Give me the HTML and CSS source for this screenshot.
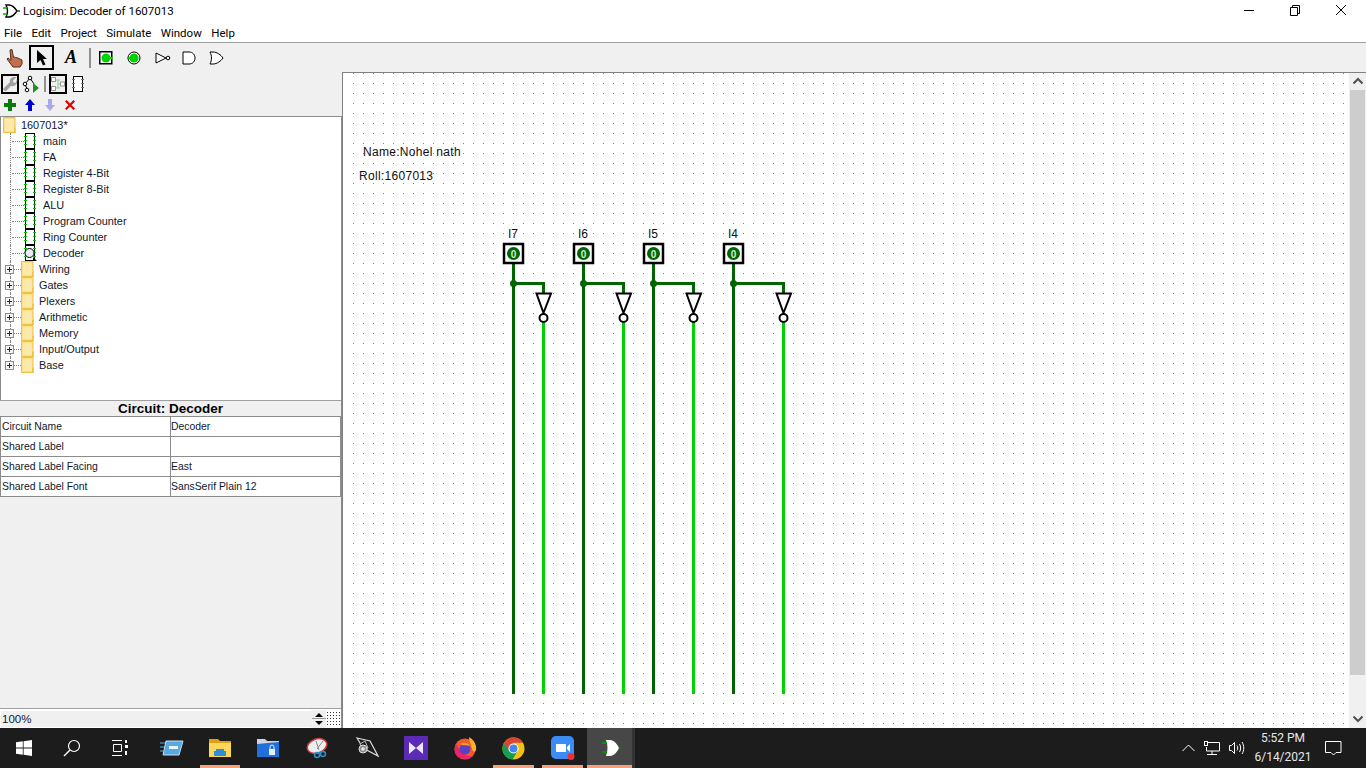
FILE: index.html
```html
<!DOCTYPE html>
<html lang="en">
<head>
<meta charset="utf-8">
<title>Logisim: Decoder of 1607013</title>
<link rel="stylesheet" href="styles.css">
</head>
<body>
<svg class="defs" width="0" height="0" aria-hidden="true">
  <defs>
    <symbol id="ic-circuit" viewBox="0 0 12 16">
      <rect x="1.500" y="0.500" width="9" height="15" fill="#fff" stroke="#000"/>
      <g fill="#00c800"><rect x="0" y="3" width="3" height="1"/><rect x="0" y="7" width="3" height="1"/><rect x="0" y="11" width="3" height="1"/><rect x="9" y="3" width="3" height="1"/><rect x="9" y="7" width="3" height="1"/><rect x="9" y="11" width="3" height="1"/></g>
      <g fill="#004000"><rect x="1" y="5" width="1" height="1"/><rect x="1" y="9" width="1" height="1"/><rect x="10" y="5" width="1" height="1"/><rect x="10" y="9" width="1" height="1"/></g>
    </symbol>
    <symbol id="ic-folder" viewBox="0 0 13 16">
      <path d="M.5.5h11.500v10.500h1v4.500H.5z" fill="#fde08c" stroke="#eec23e"/>
      <path d="M2 2h9v12H2z" fill="#fee9ac"/>
      <path d="M11.500 11v4" stroke="#eec23e" fill="none"/>
    </symbol>
    <symbol id="ic-exp" viewBox="0 0 9 9">
      <rect x=".5" y=".5" width="8" height="8" fill="#f4f4f4" stroke="#8c8c8c"/>
      <path d="M2 4.500h5M4.500 2v5" stroke="#1a2a55" fill="none"/>
    </symbol>
  </defs>
</svg>

<header class="titlebar">
  <svg class="app-icon" width="18" height="16" viewBox="0 0 18 16"><path d="M4 2h3c4 0 6 3 8 6-2 3-4 6-8 6H4c2-4 2-8 0-12z" fill="#fff" stroke="#000" stroke-width="1.400"/><path d="M1 5h4M1 11h4" stroke="#00b000" stroke-width="1.600"/><path d="M15 8h3" stroke="#008000" stroke-width="1.600"/></svg>
  <span class="title-text">Logisim: Decoder of 1607013</span>
  <div class="win-btns">
    <svg width="46" height="22" viewBox="0 0 46 22"><path d="M18 10.500h10" stroke="#000"/></svg>
    <svg width="46" height="22" viewBox="0 0 46 22"><path d="M18.500 7.500h7v8h-7zM20.500 7.500v-2h7v8h-2" fill="none" stroke="#000"/></svg>
    <svg width="46" height="22" viewBox="0 0 46 22"><path d="M18 5l10 10M28 5L18 15" stroke="#000"/></svg>
  </div>
</header>
<nav class="menubar">
  <span>File</span><span>Edit</span><span>Project</span><span>Simulate</span><span>Window</span><span>Help</span>
</nav>
<div class="toolbar">
  <svg class="t-hand" width="18" height="20" viewBox="0 0 18 20"><path d="M6 1.500l1.500 8 1-.5 1 .5 1.500.3 2 .7 3 1.500v4l-2 3H7l-6-8 1-1 3 2.500L4 2z" fill="#c0704c" stroke="#5a2c18"/></svg>
  <span class="t-box"><svg width="14" height="18" viewBox="0 0 14 18"><path d="M2 1v13l3.500-3 2.500 5.500 2.500-1-2.500-5.500H12z" fill="#000"/></svg></span>
  <span class="t-a">A</span>
  <span class="t-sep"></span>
  <svg class="t-i1" width="14" height="14" viewBox="0 0 14 14"><rect x=".75" y=".75" width="12" height="12" fill="#fff" stroke="#000" stroke-width="1.500"/><circle cx="7" cy="7" r="4.500" fill="#00d200"/><path d="M9 7h5" stroke="#00d200" stroke-width="2"/></svg>
  <svg class="t-i2" width="14" height="14" viewBox="0 0 14 14"><circle cx="7" cy="7" r="6" fill="#fff" stroke="#000"/><circle cx="7" cy="7" r="4.500" fill="#00d200"/><path d="M0 7h3" stroke="#00d200" stroke-width="2"/></svg>
  <svg class="t-i3" width="16" height="14" viewBox="0 0 16 14"><path d="M1 2l10 5-10 5z" fill="#fff" stroke="#000"/><circle cx="13" cy="7" r="1.800" fill="#fff" stroke="#000"/></svg>
  <svg class="t-i4" width="14" height="14" viewBox="0 0 14 14"><path d="M1 1h6c4 0 6 3 6 6s-2 6-6 6H1z" fill="#fff" stroke="#000"/></svg>
  <svg class="t-i5" width="15" height="14" viewBox="0 0 15 14"><path d="M1 1h3c4 0 8 3 10 6-2 3-6 6-10 6H1c2-4 2-8 0-12z" fill="#fff" stroke="#000"/></svg>
</div>

<main class="workspace">
  <aside class="sidebar">
    <div class="row-tools">
      <span class="rt-box"><svg width="16" height="16" viewBox="0 0 16 16"><path d="M1 13l7-7C7 3 10 0 14.500 1.200L11 4.500l.5 2 2 .5L15 3.500c1 4-2 7.500-6 6.500l-5.500 5.500z" fill="#a0a0a0"/></svg></span>
      <svg class="rt-sim" width="18" height="18" viewBox="0 0 18 18"><path d="M8 3L3 9l2 5M8 3l4 6" fill="none" stroke="#000"/><circle cx="8" cy="3" r="1.800" fill="#fff" stroke="#000"/><circle cx="3" cy="9" r="1.800" fill="#fff" stroke="#000"/><circle cx="5" cy="15" r="1.800" fill="#fff" stroke="#000"/><path d="M11 8l6 5-6 5z" fill="#2a8a2a"/></svg>
      <span class="rt-sep"></span>
      <span class="rt-box"><svg width="16" height="16" viewBox="0 0 16 16"><path d="M5 4h5M5 12h5M8 4v8M8 8h2" stroke="#9ec89e" fill="none"/><rect x="1.500" y="1.500" width="4" height="4" fill="#fff" stroke="#999"/><rect x="1.500" y="10.500" width="4" height="4" fill="#fff" stroke="#999"/><rect x="10.500" y="6" width="4" height="4" fill="#fff" stroke="#999"/></svg></span>
      <svg class="rt-app" width="12" height="16" viewBox="0 0 12 16"><use href="#ic-circuit"/></svg>
    </div>
    <div class="row-edit">
      <svg width="12" height="12" viewBox="0 0 12 12"><path d="M4 0h4v4h4v4H8v4H4V8H0V4h4z" fill="#0a7a0a"/></svg>
      <svg width="12" height="12" viewBox="0 0 12 12"><path d="M6 0l5 6H8v6H4V6H1z" fill="#0000d0"/></svg>
      <svg width="12" height="12" viewBox="0 0 12 12"><path d="M4 0h4v6h3l-5 6-5-6h3z" fill="#a8a8f0"/></svg>
      <svg width="12" height="12" viewBox="0 0 12 12"><path d="M1 2.500L2.500 1 6 4.500 9.500 1 11 2.500 7.500 6 11 9.500 9.500 11 6 7.500 2.500 11 1 9.500 4.500 6z" fill="#e00000"/></svg>
    </div>
    <div class="lower">
    <div class="tree">
      <div class="node root"><svg class="folder" width="13" height="16"><use href="#ic-folder"/></svg><span>1607013*</span></div>
      <div class="node circ"><i class="conn"></i><svg class="cic" width="12" height="16"><use href="#ic-circuit"/></svg><span>main</span></div>
      <div class="node circ"><i class="conn"></i><svg class="cic" width="12" height="16"><use href="#ic-circuit"/></svg><span>FA</span></div>
      <div class="node circ"><i class="conn"></i><svg class="cic" width="12" height="16"><use href="#ic-circuit"/></svg><span>Register 4-Bit</span></div>
      <div class="node circ"><i class="conn"></i><svg class="cic" width="12" height="16"><use href="#ic-circuit"/></svg><span>Register 8-Bit</span></div>
      <div class="node circ"><i class="conn"></i><svg class="cic" width="12" height="16"><use href="#ic-circuit"/></svg><span>ALU</span></div>
      <div class="node circ"><i class="conn"></i><svg class="cic" width="12" height="16"><use href="#ic-circuit"/></svg><span>Program Counter</span></div>
      <div class="node circ"><i class="conn"></i><svg class="cic" width="12" height="16"><use href="#ic-circuit"/></svg><span>Ring Counter</span></div>
      <div class="node circ"><i class="conn"></i><svg class="cic-d" width="14" height="16" viewBox="0 0 14 16"><use href="#ic-circuit" width="12" height="16"/><circle cx="5.500" cy="8" r="4.500" fill="#e8ecf8" stroke="#000"/><path d="M9 12l4 4h-4z" fill="#000"/></svg><span>Decoder</span></div>
      <div class="node lib"><svg class="exp" width="9" height="9"><use href="#ic-exp"/></svg><i class="dots"></i><svg class="folder" width="13" height="16"><use href="#ic-folder"/></svg><span>Wiring</span></div>
      <div class="node lib"><svg class="exp" width="9" height="9"><use href="#ic-exp"/></svg><i class="dots"></i><svg class="folder" width="13" height="16"><use href="#ic-folder"/></svg><span>Gates</span></div>
      <div class="node lib"><svg class="exp" width="9" height="9"><use href="#ic-exp"/></svg><i class="dots"></i><svg class="folder" width="13" height="16"><use href="#ic-folder"/></svg><span>Plexers</span></div>
      <div class="node lib"><svg class="exp" width="9" height="9"><use href="#ic-exp"/></svg><i class="dots"></i><svg class="folder" width="13" height="16"><use href="#ic-folder"/></svg><span>Arithmetic</span></div>
      <div class="node lib"><svg class="exp" width="9" height="9"><use href="#ic-exp"/></svg><i class="dots"></i><svg class="folder" width="13" height="16"><use href="#ic-folder"/></svg><span>Memory</span></div>
      <div class="node lib"><svg class="exp" width="9" height="9"><use href="#ic-exp"/></svg><i class="dots"></i><svg class="folder" width="13" height="16"><use href="#ic-folder"/></svg><span>Input/Output</span></div>
      <div class="node lib"><svg class="exp" width="9" height="9"><use href="#ic-exp"/></svg><i class="dots"></i><svg class="folder" width="13" height="16"><use href="#ic-folder"/></svg><span>Base</span></div>
    </div>
    <div class="attr-title">Circuit: Decoder</div>
    <table class="attrs">
      <tr><td>Circuit Name</td><td>Decoder</td></tr>
      <tr><td>Shared Label</td><td></td></tr>
      <tr><td>Shared Label Facing</td><td>East</td></tr>
      <tr><td>Shared Label Font</td><td>SansSerif Plain 12</td></tr>
    </table>
    <div class="attr-fill"></div>
    <div class="zoombar">
      <span class="zoom-val">100%</span>
      <span class="spin"><svg width="14" height="16" viewBox="0 0 14 16"><path d="M0 7.500h14" stroke="#9a9a9a"/><path d="M7 2l4 4H3zM3 10h8l-4 4z" fill="#000"/></svg></span>
      <svg class="grid-ic" width="14" height="14" viewBox="0 0 14 14"><defs><pattern id="gd" width="3" height="3" patternUnits="userSpaceOnUse"><rect width="1" height="1" fill="#333"/></pattern></defs><rect width="14" height="14" fill="url(#gd)"/></svg>
    </div>
    </div>
  </aside>

  <div class="canvas-wrap">
    <svg class="canvas" width="1006" height="655" viewBox="343 73 1006 655">
      <defs>
        <pattern id="dots" x="353" y="73" width="10" height="10" patternUnits="userSpaceOnUse"><rect width="1" height="1" fill="#808080"/></pattern>
        <g id="not"><path d="M-7 11.500H7.500L0 31z" fill="#fff" stroke="#000" stroke-width="2"/><circle cx="0" cy="36" r="4" fill="#fff" stroke="#000" stroke-width="2"/></g>
        <g id="pin"><rect x="-9" y="-10" width="19" height="19" fill="#fff" stroke="#000" stroke-width="2.500"/><circle cx="0.500" cy="-0.500" r="6.500" fill="#006400"/></g>
      </defs>
      <rect x="343" y="73" width="1006" height="655" fill="#fff"/>
      <rect x="344" y="73" width="1005" height="655" fill="url(#dots)"/>
      <text class="note" x="363" y="156">Name:Nohel nath</text>
      <text class="note" x="359" y="180">Roll:1607013</text>

      <g class="wd">
        <path d="M513.500 263V694M513.500 283.500H543.500V294"/>
        <path d="M583.500 263V694M583.500 283.500H623.500V294"/>
        <path d="M653.500 263V694M653.500 283.500H693.500V294"/>
        <path d="M733.500 263V694M733.500 283.500H783.500V294"/>
      </g>
      <g class="wl">
        <path d="M543.500 322V694M623.500 322V694M693.500 322V694M783.500 322V694"/>
      </g>
      <g fill="#006400">
        <circle cx="513.500" cy="283.500" r="3.500"/><circle cx="583.500" cy="283.500" r="3.500"/><circle cx="653.500" cy="283.500" r="3.500"/><circle cx="733.500" cy="283.500" r="3.500"/>
      </g>
      <use href="#not" x="543.500" y="282"/><use href="#not" x="623.500" y="282"/><use href="#not" x="693.500" y="282"/><use href="#not" x="783.500" y="282"/>
      <use href="#pin" x="513" y="254"/><use href="#pin" x="583" y="254"/><use href="#pin" x="653" y="254"/><use href="#pin" x="733" y="254"/>
      <g class="bit"><text x="513.500" y="257.500">0</text><text x="583.500" y="257.500">0</text><text x="653.500" y="257.500">0</text><text x="733.500" y="257.500">0</text></g>
      <g class="lbl"><text x="513" y="238">I7</text><text x="583" y="238">I6</text><text x="653" y="238">I5</text><text x="733" y="238">I4</text></g>
    </svg>
    <div class="vscroll">
      <svg width="16" height="17" viewBox="0 0 16 17"><path d="M3.500 10.500L8 6l4.500 4.500" fill="none" stroke="#505050" stroke-width="2"/></svg>
      <div class="thumb"></div>
      <svg width="16" height="17" viewBox="0 0 16 17"><path d="M3.500 6.500L8 11l4.500-4.500" fill="none" stroke="#505050" stroke-width="2"/></svg>
    </div>
  </div>
</main>

<footer class="taskbar">
  <span class="tb"><svg width="16" height="16" viewBox="0 0 16 16"><path d="M0 2.300l6.800-1v6.300H0zM7.600 1.200L16 0v7.600H7.600zM0 8.400h6.800v6.300l-6.800-1zM7.600 8.400H16V16l-8.400-1.200z" fill="#fff"/></svg></span>
  <span class="tb"><svg width="18" height="18" viewBox="0 0 18 18"><circle cx="11" cy="7" r="5.500" fill="none" stroke="#fff" stroke-width="1.200"/><path d="M7 11l-6 6" stroke="#fff" stroke-width="1.400"/></svg></span>
  <span class="tb"><svg width="18" height="16" viewBox="0 0 18 16"><path d="M1 .5h10M1 15.500h10M2.500 4.500h8v7h-8z" fill="none" stroke="#fff"/><path d="M14 0h2v3h-2zM14 5h3v3h-3zM14 11h2v4h-2z" fill="#fff"/></svg></span>
  <span class="tb tb-gap"><svg width="24" height="18" viewBox="0 0 24 18"><path d="M6 2h17l-4 14H3z" fill="#5aa8e0" stroke="#bfe0f5"/><path d="M9 7h9v3H9z" fill="#e8f4fc"/><path d="M0 4h5M0 8h4M0 12h3" stroke="#5aa8e0"/></svg></span>
  <span class="tb tb-on"><svg width="22" height="18" viewBox="0 0 22 18"><path d="M0 0h9l2 2h11v16H0z" fill="#e0a010"/><path d="M0 4h22v14H0z" fill="#fbd75c"/><path d="M7 10h8v2h2v5H5v-5h2z" fill="#2f8fd6"/></svg></span>
  <span class="tb"><svg width="22" height="18" viewBox="0 0 22 18"><path d="M0 0h8l2 2h12v4H0z" fill="#d0d4da"/><path d="M0 5l22-2v15H0z" fill="#1f6fdc"/><path d="M12 10h6v6h-6z" fill="#e8eef8"/><path d="M13 10V8a2 2 0 014 0v2" fill="none" stroke="#e8eef8"/></svg></span>
  <span class="tb tb-gap2"><svg width="24" height="22" viewBox="0 0 24 22"><ellipse cx="11" cy="9" rx="10" ry="7" transform="rotate(-20 11 9)" fill="#eee" stroke="#c94040" stroke-width="1.500"/><path d="M10 4l3 9M17 4l-6 8" stroke="#8a8a8a"/><circle cx="17" cy="17" r="2.500" fill="none" stroke="#2d8ed0" stroke-width="1.500"/><circle cx="11" cy="18" r="2.500" fill="none" stroke="#2d8ed0" stroke-width="1.500"/></svg></span>
  <span class="tb tb-w49"><svg width="24" height="24" viewBox="0 0 24 24"><path d="M2 2l13 3 8 15-15-8z" fill="none" stroke="#ddd" stroke-width="1.200"/><path d="M5 8l5-3 3 7-5 3z" fill="#1c1c1c" stroke="#bbb"/><circle cx="8" cy="13" r="4" fill="#888" stroke="#ddd"/><circle cx="8" cy="13" r="1.800" fill="#eee"/></svg></span>
  <span class="tb tb-w49"><svg width="24" height="24" viewBox="0 0 24 24"><rect width="24" height="24" rx="1" fill="#5b2bb8"/><path d="M5 6l7 6-7 6zM19 6l-7 6 7 6z" fill="#ece8fa"/></svg></span>
  <span class="tb tb-w49"><svg width="24" height="24" viewBox="0 0 24 24"><circle cx="12" cy="13" r="10.500" fill="#f25a2a"/><path d="M16 1c5 3 8 8 7 13-1 3-3 2-4-1-1-5-3-8-3-12z" fill="#fcb02c"/><path d="M3 8c-2 4-2 9 1 12 4 4 12 4 16 0-6 1-12-2-17-12z" fill="#e9246a"/><circle cx="12" cy="13" r="5.500" fill="#5b3fc4"/><path d="M7 8c3-2 8-2 10 2-3-1-7 0-10-2z" fill="#ff9a2e"/></svg></span>
  <span class="tb tb-w49 tb-on"><svg width="23" height="23" viewBox="0 0 24 24"><circle cx="12" cy="12" r="11.500" fill="#f4c20d"/><path d="M12 .5A11.500 11.500 0 002 6.300L7 15l5-9h10a11.500 11.500 0 00-10-5.500z" fill="#dc4335"/><path d="M2 6.300A11.500 11.500 0 0011 23.500L16 15H8z" fill="#149d52"/><circle cx="12" cy="12" r="5.300" fill="#fff"/><circle cx="12" cy="12" r="4.200" fill="#4285f4"/></svg></span>
  <span class="tb tb-w49 tb-on"><svg width="24" height="24" viewBox="0 0 24 24"><rect width="23" height="23" rx="5" fill="#3d8cf6"/><path d="M5 8h9a1 1 0 011 1v7H6a1 1 0 01-1-1zM16 11l3-3v8l-3-3z" fill="#fff"/><circle cx="20" cy="20.500" r="3.500" fill="#f03030"/></svg></span>
  <span class="tb tb-active"><svg width="22" height="18" viewBox="0 0 22 18"><path d="M5 1h4c4 0 7 4 9 8-2 4-5 8-9 8H5c2-5 2-11 0-16z" fill="#fff"/><path d="M1 4h5M1 13h5" stroke="#00a000" stroke-width="1.500"/><path d="M18 9h3" stroke="#008000" stroke-width="1.500"/></svg></span>
  <span class="tb-sliver"></span>

  <div class="tray">
    <svg class="tr-up" width="13" height="8" viewBox="0 0 13 8"><path d="M.5 7l6-6 6 6" fill="none" stroke="#fff"/></svg>
    <svg class="tr-net" width="17" height="14" viewBox="0 0 17 14"><path d="M.5 1.500h15v8.500h-13V6M8 10v3M3 13.500h10" fill="none" stroke="#fff"/><rect x=".5" y=".5" width="3" height="4" fill="#1c1c1c" stroke="#fff"/></svg>
    <svg class="tr-vol" width="17" height="14" viewBox="0 0 17 14"><path d="M.5 4.500h2l3-3v11l-3-3h-2zM8 4.500c1 1.500 1 3.500 0 5M10.500 3c1.500 2.500 1.500 5.500 0 8M13 1c2.300 3.500 2.300 8.500 0 12" fill="none" stroke="#fff"/></svg>
    <div class="clock"><span>5:52 PM</span><span>6/14/2021</span></div>
    <svg class="tr-note" width="17" height="15" viewBox="0 0 17 15"><path d="M.5.500h15.500v11h-5l-2.500 2.500L6 11.500H.5z" fill="none" stroke="#fff"/></svg>
  </div>
</footer>
</body>
</html>
```

FILE: styles.css
```css
* { box-sizing: border-box; }
html, body { margin: 0; padding: 0; }
body {
  width: 1366px;
  height: 768px;
  overflow: hidden;
  background: #fff;
  font-family: "Liberation Sans", Arial, sans-serif;
  font-size: 11px;
  color: #000;
  display: flex;
  flex-direction: column;
}
svg { display: block; flex: none; }
.defs { position: absolute; }

.titlebar { height: 22px; display: flex; align-items: center; background: #fff; }
.app-icon { margin-left: 2px; }
.title-text { margin-left: 3px; font: 11.5px Roboto, "Noto Sans", sans-serif; color: #000; }
.win-btns { margin-left: auto; display: flex; margin-right: 2px; }

.menubar {
  height: 21px;
  display: flex;
  align-items: center;
  gap: 9.500px;
  padding: 2px 0 0 4px;
  font: 11.5px Roboto, "Noto Sans", sans-serif;
  border-bottom: 1px solid #a0a0a0;
  background: #fff;
}

.toolbar { height: 29px; background: #f0f0f0; display: flex; align-items: center; }
.t-hand { margin-left: 6px; }
.t-box { margin-left: 5px; width: 25px; height: 25px; border: 2px solid #000; display: flex; align-items: center; justify-content: center; }
.t-a { margin-left: 11px; font: italic bold 18px "Liberation Serif", serif; width: 13px; }
.t-sep { margin-left: 11px; width: 2px; height: 20px; background: #909090; }
.t-i1 { margin-left: 8px; }
.t-i2 { margin-left: 14px; }
.t-i3 { margin-left: 14px; }
.t-i4 { margin-left: 11px; }
.t-i5 { margin-left: 13px; }

.workspace { height: 656px; display: flex; background: #f0f0f0; }
.sidebar { width: 342px; flex: none; display: flex; flex-direction: column; }
.row-tools { height: 23px; display: flex; align-items: center; padding: 1px 0 0 1px; }
.rt-box { width: 18px; height: 20px; border: 2px solid #000; display: flex; align-items: center; justify-content: center; }
.rt-sim { margin-left: 3px; }
.rt-sep { width: 2px; height: 16px; background: #909090; margin: 0 3px 0 4px; }
.rt-app { margin-left: 5px; }
.row-edit { height: 21px; display: flex; align-items: center; gap: 8px; padding: 0 0 1px 4px; }

.lower { flex: 1; display: flex; flex-direction: column; border-right: 1px solid #8c8c8c; min-height: 0; }
.tree { height: 284px; background: #fff; border-top: 1px solid #8c8c8c; border-left: 1px solid #8c8c8c; color: #10182c; }
.node { height: 16px; display: flex; align-items: center; white-space: nowrap; font-size: 10.900px; }
.node.root .folder { margin-left: 2px; }
.node.root span { margin-left: 5px; }
.conn { width: 14px; height: 16px; margin-left: 9px; border-left: 1px dotted #808080; position: relative; flex: none; }
.conn::after { content: ""; position: absolute; left: 1px; right: 0; top: 8px; border-top: 1px dotted #808080; }
.node.circ span { margin-left: 7px; }
.node.circ .cic-d + span { margin-left: 5px; }
.node.lib { position: relative; }
.exp { margin-left: 4px; }
.dots { width: 7px; border-top: 1px dotted #808080; flex: none; }
.node.lib span { margin-left: 5px; }
.node.lib::before { content: ""; position: absolute; left: 9px; top: 0; height: 4px; border-left: 1px dotted #808080; }
.node.lib:not(:last-child)::after { content: ""; position: absolute; left: 9px; top: 13px; height: 3px; border-left: 1px dotted #808080; }

.attr-title { height: 16px; background: #f0f0f0; border-top: 1px solid #a0a0a0; text-align: center; font-weight: bold; font-size: 13.500px; line-height: 15px; }
.attrs { width: 341px; border-collapse: collapse; table-layout: fixed; background: #fff; }
.attrs td { height: 20px; padding: 0 0 1px 1px; border: 1px solid #8c8c8c; white-space: nowrap; color: #10182c; font-size: 10.400px; }
.attrs td:first-child { width: 170px; }
.attrs td + td { padding-left: 0; }
.attr-fill { flex: 1; background: #f0f0f0; }
.zoombar { height: 20px; background: #fff; border-top: 1px solid #a0a0a0; display: flex; align-items: center; padding: 1px 0; }
.zoom-val { width: 310px; height: 16px; margin-left: 1px; background: #f0f0f0; line-height: 16px; padding-left: 1px; color: #10182c; font-size: 11.500px; }
.spin { width: 15px; height: 18px; background: #f0f0f0; display: flex; align-items: center; justify-content: center; }
.grid-ic { margin-left: 1px; }

.canvas-wrap { flex: 1; display: flex; border-top: 1px solid #808080; border-left: 1px solid #808080; background: #fff; min-width: 0; }
.canvas { flex: none; }
.note { font: 12px "Liberation Sans", Arial, sans-serif; fill: #111; letter-spacing: 0.3px; }
.wd path { fill: none; stroke: #006400; stroke-width: 3; }
.wl path { fill: none; stroke: #00d200; stroke-width: 3; }
.bit text { font: bold 10px "Liberation Sans", sans-serif; fill: #cfeccf; text-anchor: middle; }
.lbl text { font: 12px "Liberation Sans", sans-serif; fill: #111; text-anchor: middle; }
.vscroll { width: 17px; flex: none; background: #f0f0f0; display: flex; flex-direction: column; align-items: center; }
.thumb { width: 15px; height: 585px; background: #cdcdcd; }
.vscroll svg:last-child { margin-top: auto; margin-bottom: 1px; }

.taskbar { height: 40px; background: #1c1c1c; display: flex; align-items: stretch; color: #fff; }
.tb { width: 48px; flex: none; display: flex; align-items: center; justify-content: center; position: relative; }
.tb-gap { margin-left: 4px; }
.tb-gap2 { margin-left: 2px; }
.tb-w49 { width: 49px; }
.tb-on::after, .tb-active::after { content: ""; position: absolute; left: 4px; right: 4px; bottom: 0; height: 3px; background: #f7a07a; }
.tb-active { background: #474747; width: 45px; padding-left: 4px; }
.tb-active::after { left: 0; right: 0; }
.tb-sliver { width: 3px; background: #333; flex: none; }
.tray { margin-left: auto; display: flex; align-items: center; font: 12px Roboto, "Noto Sans", sans-serif; color: #e8e8e8; }
.tr-net { margin-left: 9px; }
.tr-vol { margin-left: 8px; }
.clock { width: 72px; margin-left: 1px; display: flex; flex-direction: column; align-items: center; line-height: 19px; }
.tr-note { margin: 0 24px 0 6px; }
```
